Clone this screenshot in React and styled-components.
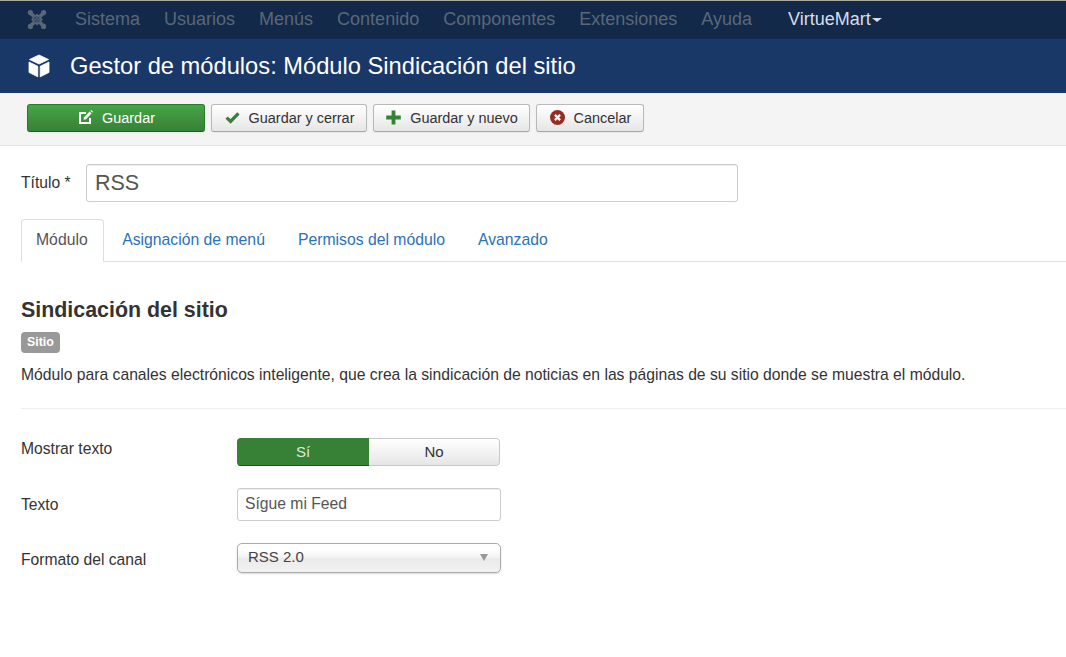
import React from "react";
import styled, { createGlobalStyle } from "styled-components";

const GlobalStyle = createGlobalStyle`
  html, body {
    margin: 0;
    background: #fff;
    font-family: "Liberation Sans", Arial, sans-serif;
    color: #333;
    overflow: hidden;
  }
`;

const Page = styled.div`
  width: 1066px;
  height: 657px;
  overflow: hidden;
`;

const NavBar = styled.nav`
  height: 37px;
  border-top: 1px solid #a9a9a4;
  background: #13294a;
  display: flex;
  align-items: center;
  padding-left: 27px;
`;

const NavItem = styled.span`
  font-size: 18px;
  color: ${(p) => (p.$active ? "#d8dde6" : "#5a6778")};
  margin-right: ${(p) => p.$gap || 24}px;
  display: inline-flex;
  align-items: center;
  margin-top: -1px;
`;

const Caret = styled.i`
  display: inline-block;
  width: 0;
  height: 0;
  margin: 2px 0 0 1px;
  border-left: 5px solid transparent;
  border-right: 5px solid transparent;
  border-top: 4px solid #d8dde6;
`;

const TitleBar = styled.header`
  height: 55px;
  background: #1a3867;
  color: #fff;
  display: flex;
  align-items: center;
  padding-left: 28px;
  gap: 20px;
  font-size: 23.7px;
  border-top: 1px solid #142c54;
  box-sizing: border-box;
`;

const Toolbar = styled.div`
  height: 53px;
  box-sizing: border-box;
  background: #f4f4f4;
  border-bottom: 1px solid #e4e4e4;
  display: flex;
  align-items: flex-start;
  padding: 11px 0 0 27px;
  gap: 6px;
`;

const ToolButton = styled.button`
  height: 28px;
  width: ${(p) => p.$width}px;
  box-sizing: border-box;
  display: flex;
  align-items: center;
  justify-content: center;
  gap: 9px;
  padding: 0 0 0 1px;
  font: 14.45px "Liberation Sans", Arial, sans-serif;
  border-radius: 3px;
  color: ${(p) => (p.$primary ? "#fff" : "#333")};
  border: 1px solid ${(p) => (p.$primary ? "#2c7a2c" : "#b9b9b9")};
  border-bottom-color: ${(p) => (p.$primary ? "#1f5f1f" : "#a6a6a6")};
  background: ${(p) =>
    p.$primary
      ? "linear-gradient(#46a546, #378137)"
      : "linear-gradient(#ffffff, #e6e6e6)"};
  box-shadow: 0 1px 2px rgba(0, 0, 0, 0.05);

  svg {
    flex: none;
    margin-top: -1px;
  }
`;

const Content = styled.main`
  padding: 18px 0 0 21px;
`;

const TitleRow = styled.div`
  display: flex;
  align-items: center;
  height: 38px;
  gap: 16px;
`;

const Label = styled.label`
  font-size: 15.65px;
  color: #333;
  white-space: nowrap;
  width: ${(p) => p.$width || "auto"};
  flex: none;
`;

const TitleInput = styled.div`
  width: 652px;
  height: 38px;
  box-sizing: border-box;
  border: 1px solid #ccc;
  border-radius: 3px;
  box-shadow: inset 0 1px 1px rgba(0, 0, 0, 0.07);
  font-size: 21.5px;
  color: #555;
  padding-left: 8px;
  display: flex;
  align-items: center;
`;

const Tabs = styled.div`
  display: flex;
  height: 43px;
  box-sizing: border-box;
  margin-top: 17px;
  border-bottom: 1px solid #ddd;
`;

const Tab = styled.a`
  box-sizing: border-box;
  height: ${(p) => (p.$active ? 43 : 42)}px;
  padding: 11px ${(p) => (p.$active ? 15.5 : 15)}px 0 14px;
  margin-right: ${(p) => (p.$active ? 3 : 2)}px;
  font-size: 15.75px;
  line-height: 18px;
  color: ${(p) => (p.$active ? "#555" : "#2a72ba")};
  background: ${(p) => (p.$active ? "#fff" : "transparent")};
  border: 1px solid ${(p) => (p.$active ? "#ddd" : "transparent")};
  border-bottom: ${(p) => (p.$active ? "1px solid #fff" : "none")};
  border-radius: 4px 4px 0 0;
`;

const Heading = styled.h2`
  margin: 36px 0 0;
  font-size: 21.4px;
  line-height: 24px;
  font-weight: 700;
  color: #333;
`;

const Badge = styled.span`
  display: inline-block;
  margin-top: 10px;
  padding: 0 6px;
  height: 21px;
  line-height: 20px;
  box-sizing: border-box;
  border-radius: 4px;
  background: #999;
  color: #fff;
  font-size: 12.4px;
  font-weight: 700;
`;

const Description = styled.p`
  margin: 12px 0 0;
  font-size: 15.7px;
  line-height: 20px;
  white-space: nowrap;
  color: #333;
`;

const Divider = styled.hr`
  margin: 23px 0 0;
  border: 0;
  border-top: 1px solid #eee;
`;

const Form = styled.div`
  margin-top: 29px;
  display: grid;
  grid-template-columns: 216px 264px;
  grid-template-rows: 28px 33px 30px;
  row-gap: 22px;
  align-items: start;
`;

const RowLabel = styled(Label)`
  line-height: 20px;
  margin-top: ${(p) => p.$top}px;
`;

const Toggle = styled.div`
  display: flex;
  width: 263px;
  height: 28px;
  box-sizing: border-box;
  border-radius: 4px;
  overflow: hidden;
  font-size: 15px;
`;

const ToggleYes = styled.div`
  width: 132px;
  background: #378137;
  color: #dbead9;
  border-bottom: 1px solid #215021;
  text-align: center;
  line-height: 27px;
`;

const ToggleNo = styled.div`
  flex: 1;
  color: #333;
  background: linear-gradient(#ffffff, #e6e6e6);
  border: 1px solid #c8c8c8;
  border-left: 0;
  border-radius: 0 4px 4px 0;
  text-align: center;
  line-height: 26px;
`;

const TextField = styled.div`
  width: 264px;
  height: 33px;
  box-sizing: border-box;
  border: 1px solid #ccc;
  border-radius: 3px;
  box-shadow: inset 0 1px 1px rgba(0, 0, 0, 0.07);
  font-size: 15.7px;
  line-height: 29px;
  color: #555;
  padding-left: 7px;
`;

const SelectBox = styled.div`
  width: 264px;
  height: 30px;
  box-sizing: border-box;
  border: 1px solid #aaa;
  border-radius: 5px;
  background: linear-gradient(#fff 20%, #f2f2f2 50%, #eaeaea 52%, #f2f2f2);
  box-shadow: 0 1px 2px rgba(0, 0, 0, 0.15);
  font-size: 15px;
  line-height: 26px;
  color: #444;
  padding: 0 12px 0 10px;
  display: flex;
  align-items: flex-start;
  justify-content: space-between;

  &::after {
    content: "";
    margin-top: 10px;
    width: 0;
    height: 0;
    border-left: 4px solid transparent;
    border-right: 4px solid transparent;
    border-top: 7px solid #999;
  }
`;

const JoomlaLogo = () => (
  <svg width="20" height="21" viewBox="0 0 20 21" fill="none" strokeLinecap="round">
    <path d="M3.5 4 L16.5 17 M16.5 4 L3.5 17" stroke="#5a6778" strokeWidth="3.6" />
    <path d="M10 4.6 L15.9 10.5 L10 16.4 L4.1 10.5 Z" fill="#5a6778" />
    <path d="M7.2 7.7 L12.8 13.3 M12.8 7.7 L7.2 13.3" stroke="#13294a" strokeWidth="1" opacity="0.55" />
    <path d="M10 7.6 L12.9 10.5 L10 13.4 L7.1 10.5 Z" stroke="#13294a" strokeWidth="0.9" opacity="0.6" />
    <g fill="#5a6778">
      <circle cx="3.4" cy="3.6" r="2.6" />
      <circle cx="16.6" cy="3.6" r="2.6" />
      <circle cx="3.4" cy="17.4" r="2.6" />
      <circle cx="16.6" cy="17.4" r="2.6" />
    </g>
  </svg>
);

const CubeIcon = () => (
  <svg width="22" height="24" viewBox="0 0 22 24" fill="#fff" stroke="#fff" strokeWidth="0.8" strokeLinejoin="round">
    <path d="M11 1 L20.5 5.5 L11 10 L1.5 5.5 Z" />
    <path d="M1 8 L9.8 12.3 L9.8 22.8 L1 18.4 Z" />
    <path d="M21 8 L12.2 12.3 L12.2 22.8 L21 18.4 Z" />
  </svg>
);

const EditIcon = () => (
  <svg width="15" height="15" viewBox="0 0 15 15" fill="none">
    <path d="M8 3 H2 V13 H12 V8" stroke="#fff" strokeWidth="2" />
    <path d="M5.5 9.8 L6 7.4 L11.6 1.6 L13.6 3.6 L8 9.3 Z" fill="#fff" />
    <path d="M12.4 0.8 L13.2 0 L15 1.8 L14.3 2.6 Z" fill="#fff" />
  </svg>
);

const CheckIcon = () => (
  <svg width="15" height="15" viewBox="0 0 15 15" fill="none">
    <path d="M1.6 7.6 L5.6 11.4 L13.4 3.4" stroke="#378137" strokeWidth="3.2" />
  </svg>
);

const PlusIcon = () => (
  <svg width="15" height="15" viewBox="0 0 15 15">
    <path d="M5.6 0.5 H9.4 V5.6 H14.8 V9.4 H9.4 V14.5 H5.6 V9.4 H0.2 V5.6 H5.6 Z" fill="#378137" />
  </svg>
);

const CancelIcon = () => (
  <svg width="15" height="15" viewBox="0 0 15 15">
    <circle cx="7.5" cy="7.5" r="7.5" fill="#962d22" />
    <path d="M4.9 4.9 L10.1 10.1 M10.1 4.9 L4.9 10.1" stroke="#fff" strokeWidth="2.2" />
  </svg>
);

const menu = ["Sistema", "Usuarios", "Menús", "Contenido", "Componentes", "Extensiones"];
const tabs = ["Asignación de menú", "Permisos del módulo", "Avanzado"];

const App = () => (
  <Page>
    <GlobalStyle />
    <NavBar>
      <NavItem $gap={28}>
        <JoomlaLogo />
      </NavItem>
      {menu.map((item) => (
        <NavItem key={item}>{item}</NavItem>
      ))}
      <NavItem $gap={36}>Ayuda</NavItem>
      <NavItem $active>
        VirtueMart
        <Caret />
      </NavItem>
    </NavBar>
    <TitleBar>
      <CubeIcon />
      Gestor de módulos: Módulo Sindicación del sitio
    </TitleBar>
    <Toolbar>
      <ToolButton $primary $width={178}>
        <EditIcon />
        Guardar
      </ToolButton>
      <ToolButton $width={156}>
        <CheckIcon />
        Guardar y cerrar
      </ToolButton>
      <ToolButton $width={157}>
        <PlusIcon />
        Guardar y nuevo
      </ToolButton>
      <ToolButton $width={108}>
        <CancelIcon />
        Cancelar
      </ToolButton>
    </Toolbar>
    <Content>
      <TitleRow>
        <Label $width="49px">Título *</Label>
        <TitleInput>RSS</TitleInput>
      </TitleRow>
      <Tabs>
        <Tab $active>Módulo</Tab>
        {tabs.map((tab) => (
          <Tab key={tab}>{tab}</Tab>
        ))}
      </Tabs>
      <Heading>Sindicación del sitio</Heading>
      <Badge>Sitio</Badge>
      <Description>
        Módulo para canales electrónicos inteligente, que crea la sindicación de noticias en las páginas de su sitio donde se muestra el módulo.
      </Description>
      <Divider />
      <Form>
        <RowLabel $top={1}>Mostrar texto</RowLabel>
        <Toggle>
          <ToggleYes>Sí</ToggleYes>
          <ToggleNo>No</ToggleNo>
        </Toggle>
        <RowLabel $top={7}>Texto</RowLabel>
        <TextField>Sígue mi Feed</TextField>
        <RowLabel $top={7}>Formato del canal</RowLabel>
        <SelectBox>RSS 2.0</SelectBox>
      </Form>
    </Content>
  </Page>
);

export default App;
